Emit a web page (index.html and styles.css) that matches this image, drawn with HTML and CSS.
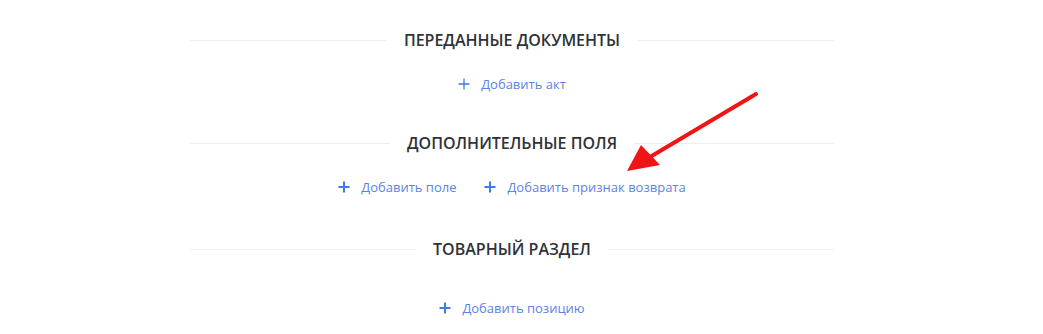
FILE: index.html
```html
<!DOCTYPE html>
<html lang="ru">
<head>
    <meta charset="UTF-8">
    <title>Документ</title>
    <link rel="stylesheet" href="styles.css">
</head>
<body>
    <div class="form">
        <div class="section">
            <div class="section-title"><span>Переданные документы</span></div>
            <div class="actions">
                <a class="add-link" href="#"><svg class="plus" viewBox="0 0 12 12"><path d="M6 0.5v11M0.5 6h11"/></svg>Добавить акт</a>
            </div>
        </div>

        <div class="section section-extra">
            <div class="section-title"><span>Дополнительные поля</span></div>
            <div class="actions">
                <a class="add-link" href="#"><svg class="plus bold" viewBox="0 0 12 12"><path d="M6 0.5v11M0.5 6h11"/></svg>Добавить поле</a>
                <a class="add-link" href="#"><svg class="plus bold" viewBox="0 0 12 12"><path d="M6 0.5v11M0.5 6h11"/></svg>Добавить признак возврата</a>
            </div>
        </div>

        <div class="section section-goods">
            <div class="section-title"><span>Товарный раздел</span></div>
            <div class="actions">
                <a class="add-link" href="#"><svg class="plus bold" viewBox="0 0 12 12"><path d="M6 0.5v11M0.5 6h11"/></svg>Добавить позицию</a>
            </div>
        </div>
    </div>

    <!-- annotation arrow -->
    <svg class="arrow" width="1043" height="334" viewBox="0 0 1043 334">
        <path d="M756 94 L650 157" stroke="#f01414" stroke-width="4" stroke-linecap="round" fill="none"/>
        <path d="M627 171 L641 145 L660 165 Z" fill="#f01414"/>
    </svg>
</body>
</html>
```

FILE: styles.css
```css
body {
    margin: 0;
    background-color: #ffffff;
    font-family: 'Open Sans', 'Noto Sans', sans-serif;
    color: #333;
}

.form {
    width: 644px;
    margin-left: 190px;
    padding-top: 29px;
}

.section-title {
    display: flex;
    align-items: center;
    gap: 17px;
    height: 22px;
}

.section-title::before,
.section-title::after {
    content: '';
    flex: 1;
    height: 1px;
    background-color: #eeeeee;
}

.section-title span {
    font-size: 16px;
    font-weight: 600;
    text-transform: uppercase;
    color: #2f3338;
}

.actions {
    display: flex;
    justify-content: center;
    gap: 28px;
    margin-top: 23px;
    height: 20px;
}

.add-link {
    display: flex;
    align-items: center;
    gap: 11px;
    font-size: 13px;
    color: #5a84e6;
    text-decoration: none;
}

.plus {
    width: 12px;
    height: 12px;
    stroke: #3f7be4;
    stroke-width: 1.3;
    fill: none;
}

.plus.bold {
    stroke-width: 2;
}

.section-extra {
    margin-top: 38px;
}

.section-goods {
    margin-top: 41px;
}

.section-goods .actions {
    margin-top: 38px;
}

.arrow {
    position: absolute;
    top: 0;
    left: 0;
    pointer-events: none;
}
```
